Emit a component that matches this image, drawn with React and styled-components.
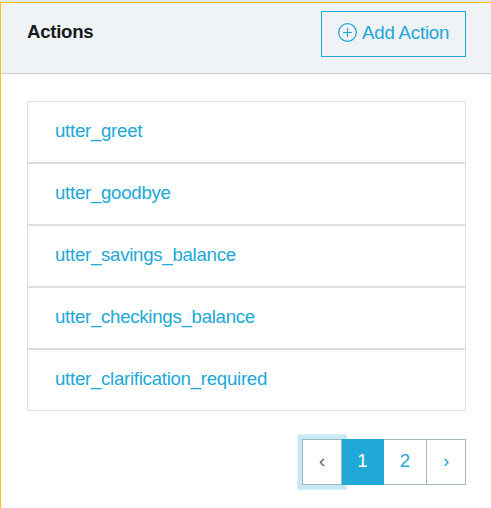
import React from "react";
import styled, { createGlobalStyle, css } from "styled-components";

const GlobalStyle = createGlobalStyle`
  * { box-sizing: border-box; }
  body {
    margin: 0;
    background: #e4e5e6;
    font-family: "Liberation Sans", Arial, sans-serif;
    font-size: 18.667px;
    line-height: 28px;
    letter-spacing: -0.28px;
    color: #181b1e;
  }
`;

const Card = styled.section`
  margin-top: 2px;
  height: 506px;
  overflow: hidden;
  background: #fff;
  border: solid #ffc107;
  border-width: 1px 0 0 1px;
`;

const CardHeader = styled.header`
  display: flex;
  justify-content: space-between;
  align-items: flex-start;
  height: 71px;
  padding: 8px 25px 0 26px;
  background: #f0f3f5;
  border-bottom: 1px solid #c8ced3;
`;

const Title = styled.strong`
  margin-top: 7px;
`;

const AddButton = styled.button`
  display: flex;
  align-items: center;
  gap: 5px;
  width: 145px;
  height: 46px;
  padding: 0 0 2px 16px;
  border: 1px solid #20a8d8;
  background: transparent;
  color: #20a8d8;
  font: inherit;
  letter-spacing: -0.2px;
  white-space: nowrap;
`;

const PlusIcon = styled.svg`
  flex: none;
  width: 19px;
  height: 19px;
  margin-bottom: 1px;
  fill: none;
  stroke: currentColor;
  stroke-width: 1.2;
`;

const CardBody = styled.div`
  padding: 27px 25px 0 26px;
`;

const ActionList = styled.ul`
  margin: 0;
  padding: 0;
  list-style: none;
`;

const ActionItem = styled.li`
  height: 62px;
  padding: 15px 27px;
  border: 1px solid #dedfdf;
`;

const ActionLink = styled.a`
  color: #20a8d8;
  text-decoration: none;
`;

const Pagination = styled.nav`
  display: flex;
  justify-content: flex-end;
  margin-top: 28px;
`;

const PageButton = styled.button`
  position: relative;
  width: ${(p) => p.$width}px;
  height: 46px;
  padding: 0 0 3px;
  border: 1px solid #a4b7c1;
  border-left-width: ${(p) => (p.$first ? 1 : 0)}px;
  background: #fff;
  color: #20a8d8;
  font: inherit;

  ${(p) =>
    p.$focused &&
    css`
      color: #5c6873;
      box-shadow: 0 0 0 4.7px rgba(32, 168, 216, 0.25);
    `}

  ${(p) =>
    p.$active &&
    css`
      z-index: 1;
      border-color: #20a8d8;
      background: #20a8d8;
      color: #fff;
    `}
`;

const actions = [
  "utter_greet",
  "utter_goodbye",
  "utter_savings_balance",
  "utter_checkings_balance",
  "utter_clarification_required",
];

export default function App() {
  return (
    <>
      <GlobalStyle />
      <Card>
        <CardHeader>
          <Title>Actions</Title>
          <AddButton>
            <PlusIcon viewBox="0 0 19 19">
              <circle cx="9.5" cy="9.5" r="8.8" />
              <path d="M9.5 5v9M5 9.5h9" />
            </PlusIcon>
            Add Action
          </AddButton>
        </CardHeader>
        <CardBody>
          <ActionList>
            {actions.map((name) => (
              <ActionItem key={name}>
                <ActionLink>{name}</ActionLink>
              </ActionItem>
            ))}
          </ActionList>
          <Pagination>
            <PageButton $width={40} $first $focused>‹</PageButton>
            <PageButton $width={42} $active>1</PageButton>
            <PageButton $width={43}>2</PageButton>
            <PageButton $width={39}>›</PageButton>
          </Pagination>
        </CardBody>
      </Card>
    </>
  );
}
